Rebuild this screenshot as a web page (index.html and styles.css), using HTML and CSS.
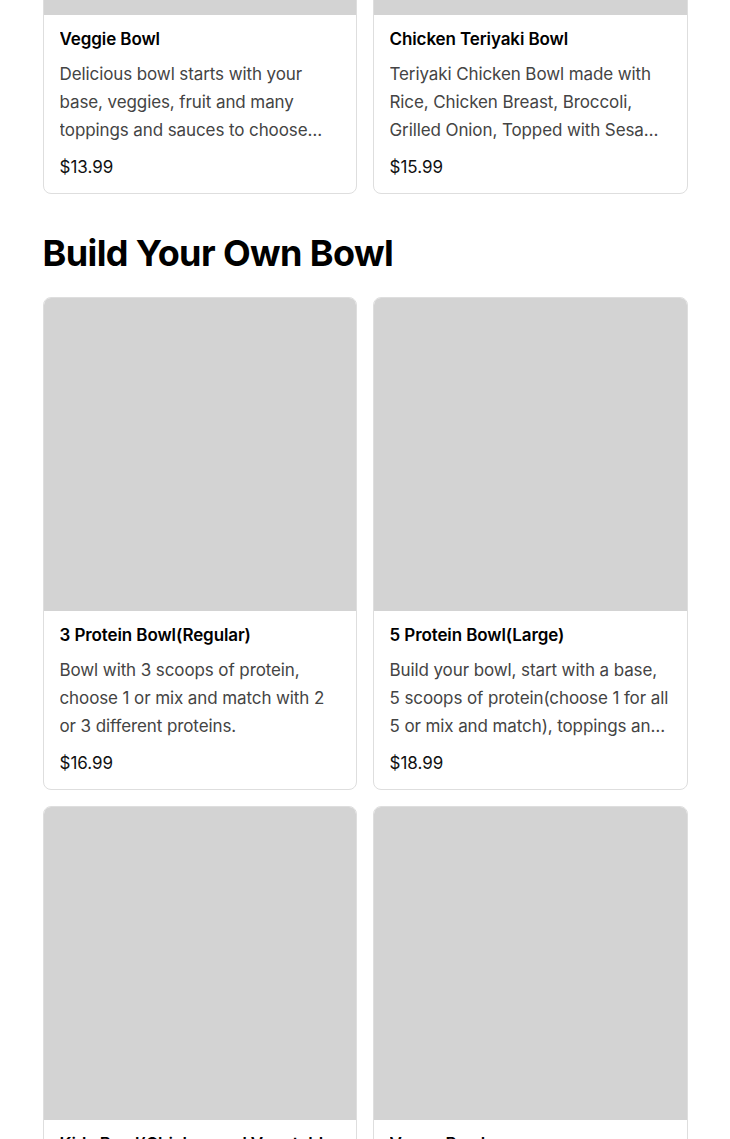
FILE: index.html
```html
<!DOCTYPE html>
<html lang="en">
<head>
<meta charset="utf-8">
<title>Menu</title>
<link rel="stylesheet" href="styles.css">
</head>
<body>
<main class="page">
  <section class="section first">
    <div class="grid">
      <article class="card">
        <div class="thumb"></div>
        <div class="body">
          <h3 class="title">Veggie Bowl</h3>
          <p class="desc">Delicious bowl starts with your base, veggies, fruit and many toppings and sauces to choose from.</p>
          <p class="price">$13.99</p>
        </div>
      </article>
      <article class="card">
        <div class="thumb"></div>
        <div class="body">
          <h3 class="title">Chicken Teriyaki Bowl</h3>
          <p class="desc">Teriyaki Chicken Bowl made with Rice, Chicken Breast, Broccoli, Grilled Onion, Topped with Sesame Seeds and Green Onion.</p>
          <p class="price">$15.99</p>
        </div>
      </article>
    </div>
  </section>

  <section class="section">
    <h2 class="heading">Build Your Own Bowl</h2>
    <div class="grid">
      <article class="card">
        <div class="thumb"></div>
        <div class="body">
          <h3 class="title">3 Protein Bowl(Regular)</h3>
          <p class="desc">Bowl with 3 scoops of protein, choose 1 or mix and match with 2 or 3 different proteins.</p>
          <p class="price">$16.99</p>
        </div>
      </article>
      <article class="card">
        <div class="thumb"></div>
        <div class="body">
          <h3 class="title">5 Protein Bowl(Large)</h3>
          <p class="desc">Build your bowl, start with a base, 5 scoops of protein(choose 1 for all 5 or mix and match), toppings and sauces.</p>
          <p class="price">$18.99</p>
        </div>
      </article>
      <article class="card">
        <div class="thumb"></div>
        <div class="body">
          <h3 class="title">Kids Bowl(Chicken and Vegetables only)</h3>
          <p class="desc">Bowl with rice, chicken and steamed vegetables for kids.</p>
          <p class="price">$9.99</p>
        </div>
      </article>
      <article class="card">
        <div class="thumb"></div>
        <div class="body">
          <h3 class="title">Vegan Bowl</h3>
          <p class="desc">Bowl with a base, tofu, veggies and sauces to choose from.</p>
          <p class="price">$14.99</p>
        </div>
      </article>
    </div>
  </section>
</main>
</body>
</html>
```

FILE: styles.css
```css
* { box-sizing: border-box; }
html, body { margin: 0; padding: 0; background: #fff; }
body {
  font-family: Inter, "Noto Sans", "Liberation Sans", sans-serif;
  color: #111;
  overflow: hidden;
}
.page {
  width: 645px;
  margin: -299px auto 0;
}
.grid {
  display: grid;
  grid-template-columns: 314px 315px;
  column-gap: 16px;
  row-gap: 16px;
}
.card {
  border: 1px solid #dedede;
  border-radius: 8px;
  overflow: hidden;
  background: #fff;
}
.thumb {
  height: 313px;
  background: #d3d3d3;
}
.body {
  padding: 14px 16px 14px;
}
.title {
  margin: 0;
  font-size: 17px;
  line-height: 20px;
  font-weight: 600;
  color: #000;
  letter-spacing: -0.1px;
  white-space: nowrap;
  overflow: hidden;
  text-overflow: ellipsis;
}
.desc {
  margin: 11px 0 0;
  font-size: 17px;
  line-height: 28px;
  color: #444;
  letter-spacing: -0.1px;
  display: -webkit-box;
  -webkit-line-clamp: 3;
  -webkit-box-orient: vertical;
  overflow: hidden;
  min-height: 84px;
}
.price {
  margin: 11px 0 0;
  font-size: 17px;
  line-height: 24px;
  color: #111;
}
.section + .section { margin-top: 37px; }
.heading {
  margin: 0 0 22px;
  font-size: 36px;
  line-height: 44px;
  font-weight: 700;
  color: #000;
  letter-spacing: -0.6px;
}
```
